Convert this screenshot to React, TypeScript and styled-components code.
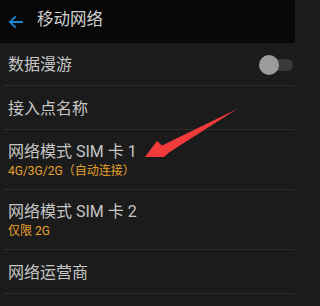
import React from "react";
import styled, { createGlobalStyle } from "styled-components";

const Global = createGlobalStyle`
  html, body { margin: 0; padding: 0; background: #1b1b1b; }
  body { font-family: Roboto, "Noto Sans CJK SC", sans-serif; }
`;

const Screen = styled.div`
  position: relative;
  width: 295px;
  height: 306px;
  overflow: hidden;
  background: #1b1b1b;
`;

const Header = styled.div`
  height: 43px;
  background: #070707;
  display: flex;
  align-items: center;
  padding-left: 8px;
  gap: 14px;
`;

const Title = styled.div`
  color: #cfcfcf;
  font-size: 16.5px;
  line-height: 1;
  margin-top: -2px;
`;

const List = styled.div`
  display: flex;
  flex-direction: column;
`;

const Row = styled.div<{ $h: number }>`
  height: ${(p) => p.$h}px;
  display: flex;
  align-items: center;
  justify-content: space-between;
  padding-left: 8px;
  position: relative;
  box-sizing: border-box;
  &::after {
    content: "";
    position: absolute;
    left: 3px;
    right: 0;
    bottom: 0;
    height: 1px;
    background: #2d2d2d;
  }
`;

const TextCol = styled.div`
  display: flex;
  flex-direction: column;
  gap: 3px;
`;

const Label = styled.div`
  color: #c6c6c6;
  font-size: 16px;
  line-height: 19px;
`;

const Sub = styled.div`
  color: #e6a12c;
  font-size: 12px;
  line-height: 14px;
`;

const Toggle = styled.div`
  position: relative;
  width: 34px;
  height: 20px;
  margin-right: 2px;
  &::before {
    content: "";
    position: absolute;
    left: 6px;
    right: 0;
    top: 4px;
    height: 12px;
    border-radius: 6px;
    background: #3a3a3a;
  }
  &::after {
    content: "";
    position: absolute;
    left: 0;
    top: 0;
    width: 20px;
    height: 20px;
    border-radius: 50%;
    background: #9b9b9b;
  }
`;

const Overlay = styled.svg`
  position: absolute;
  left: 0;
  top: 0;
  pointer-events: none;
`;

const BackIcon = () => (
  <svg width="15" height="12" viewBox="0 0 15 12">
    <path d="M14 6H2M7 1L2 6l5 5" fill="none" stroke="#1f86cf" strokeWidth="1.8" strokeLinecap="square" />
  </svg>
);

export default function App() {
  return (
    <>
      <Global />
      <Screen>
        <Header>
          <BackIcon />
          <Title>移动网络</Title>
        </Header>
        <List>
          <Row $h={43}>
            <Label>数据漫游</Label>
            <Toggle />
          </Row>
          <Row $h={44}>
            <Label>接入点名称</Label>
          </Row>
          <Row $h={60}>
            <TextCol>
              <Label>网络模式 SIM 卡 1</Label>
              <Sub>4G/3G/2G（自动连接）</Sub>
            </TextCol>
          </Row>
          <Row $h={60}>
            <TextCol>
              <Label>网络模式 SIM 卡 2</Label>
              <Sub>仅限 2G</Sub>
            </TextCol>
          </Row>
          <Row $h={44}>
            <Label>网络运营商</Label>
          </Row>
        </List>
        <Overlay width="295" height="306" viewBox="0 0 295 306">
          <path d="M237 109 L162 145.5 L157 141 L145 157 L164 157 L169 152.5 Z" fill="#f23b3b" />
        </Overlay>
      </Screen>
    </>
  );
}
